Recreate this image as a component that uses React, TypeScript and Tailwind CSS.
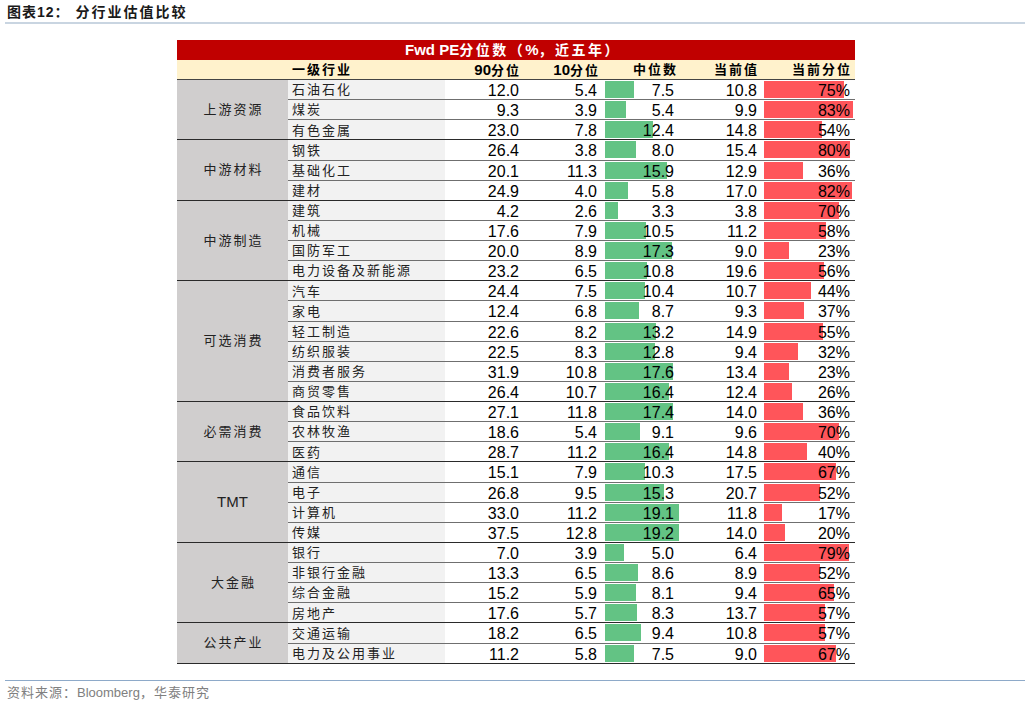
import React from 'react'

type Row = [string, number, number, number, number, number]

const groups: { label: string; rows: Row[] }[] = [
  {
    label: '上游资源',
    rows: [
      ['石油石化', 12.0, 5.4, 7.5, 10.8, 75],
      ['煤炭', 9.3, 3.9, 5.4, 9.9, 83],
      ['有色金属', 23.0, 7.8, 12.4, 14.8, 54],
    ],
  },
  {
    label: '中游材料',
    rows: [
      ['钢铁', 26.4, 3.8, 8.0, 15.4, 80],
      ['基础化工', 20.1, 11.3, 15.9, 12.9, 36],
      ['建材', 24.9, 4.0, 5.8, 17.0, 82],
    ],
  },
  {
    label: '中游制造',
    rows: [
      ['建筑', 4.2, 2.6, 3.3, 3.8, 70],
      ['机械', 17.6, 7.9, 10.5, 11.2, 58],
      ['国防军工', 20.0, 8.9, 17.3, 9.0, 23],
      ['电力设备及新能源', 23.2, 6.5, 10.8, 19.6, 56],
    ],
  },
  {
    label: '可选消费',
    rows: [
      ['汽车', 24.4, 7.5, 10.4, 10.7, 44],
      ['家电', 12.4, 6.8, 8.7, 9.3, 37],
      ['轻工制造', 22.6, 8.2, 13.2, 14.9, 55],
      ['纺织服装', 22.5, 8.3, 12.8, 9.4, 32],
      ['消费者服务', 31.9, 10.8, 17.6, 13.4, 23],
      ['商贸零售', 26.4, 10.7, 16.4, 12.4, 26],
    ],
  },
  {
    label: '必需消费',
    rows: [
      ['食品饮料', 27.1, 11.8, 17.4, 14.0, 36],
      ['农林牧渔', 18.6, 5.4, 9.1, 9.6, 70],
      ['医药', 28.7, 11.2, 16.4, 14.8, 40],
    ],
  },
  {
    label: 'TMT',
    rows: [
      ['通信', 15.1, 7.9, 10.3, 17.5, 67],
      ['电子', 26.8, 9.5, 15.3, 20.7, 52],
      ['计算机', 33.0, 11.2, 19.1, 11.8, 17],
      ['传媒', 37.5, 12.8, 19.2, 14.0, 20],
    ],
  },
  {
    label: '大金融',
    rows: [
      ['银行', 7.0, 3.9, 5.0, 6.4, 79],
      ['非银行金融', 13.3, 6.5, 8.6, 8.9, 52],
      ['综合金融', 15.2, 5.9, 8.1, 9.4, 65],
      ['房地产', 17.6, 5.7, 8.3, 13.7, 57],
    ],
  },
  {
    label: '公共产业',
    rows: [
      ['交通运输', 18.2, 6.5, 9.4, 10.8, 57],
      ['电力及公用事业', 11.2, 5.8, 7.5, 9.0, 67],
    ],
  },
]

const font = "font-['Liberation_Sans','Noto_Sans_CJK_SC',sans-serif]"

function DataRow({ row }: { row: Row }) {
  const [name, p90, p10, med, cur, pct] = row
  return (
    <div className="flex h-[20.14px] last:h-[19.14px] border-b border-[#6f6f6f] last:border-b-0">
      <div className="w-[157px] bg-[#f2f2f2] pl-[4px] pt-[1px] text-[13px] tracking-[2px] text-[#222] flex items-center">
        {name}
      </div>
      <div className="w-[80px] pr-[6px] text-right text-[16px] leading-[21px]">{p90.toFixed(1)}</div>
      <div className="w-[78px] pr-[6px] text-right text-[16px] leading-[21px]">{p10.toFixed(1)}</div>
      <div className="w-[78px] relative">
        <div
          className="absolute left-[2px] top-[1px] h-[17px] bg-[#63c384]"
          style={{ width: med * 3.88 }}
        />
        <div className="relative pr-[7px] text-right text-[16px] leading-[21px]">{med.toFixed(1)}</div>
      </div>
      <div className="w-[81px] pr-[5px] text-right text-[16px] leading-[21px]">{cur.toFixed(1)}</div>
      <div className="w-[93px] relative">
        <div
          className="absolute left-[2px] top-[1px] h-[17px] bg-[#ff555a]"
          style={{ width: pct * 1.07 }}
        />
        <div className="relative pr-[5px] text-right text-[16px] leading-[21px]">{pct}%</div>
      </div>
    </div>
  )
}

export default function App() {
  return (
    <div className={`w-[1030px] h-[705px] bg-white text-black ${font}`}>
      {/* Title */}
      <div className="pl-[7px] pt-[2px] h-[22px] leading-[20px] text-[14px] font-bold text-[#1a1a1a] flex">
        <span className="tracking-[1px]">图表12：</span>
        <span className="ml-[6px] tracking-[2px]">分行业估值比较</span>
      </div>
      <div className="mx-[5px] h-[2px] bg-[#c9d5e1]" />

      {/* Table */}
      <div className="ml-[177px] mt-[16px] w-[678px]">
        <div className="h-[20px] bg-[#c00000] text-white font-bold text-[14px] flex items-center justify-center pl-[4px] pr-[10px]">
          <span className="text-[15px]">Fwd PE</span>
          <span className="tracking-[2.5px]">分位数（</span>
          <span className="text-[15px]">%</span>
          <span className="tracking-[2.5px]">，近五年）</span>
        </div>
        <div className="h-[20px] bg-[#fff2cc] border-b border-[#444] flex font-bold text-[13px] leading-[19px]">
          <div className="w-[111px]" />
          <div className="w-[157px] pl-[4px] tracking-[2px]">一级行业</div>
          <div className="w-[80px] pr-[4px] text-right tracking-[2px]"><span className="text-[15px] tracking-normal">90</span>分位</div>
          <div className="w-[78px] pr-[3px] text-right tracking-[2px]"><span className="text-[15px] tracking-normal">10</span>分位</div>
          <div className="w-[78px] pr-[3px] text-right tracking-[2px]">中位数</div>
          <div className="w-[81px] pr-[3px] text-right tracking-[2px]">当前值</div>
          <div className="w-[93px] pr-[3px] text-right tracking-[2px]">当前分位</div>
        </div>
        {groups.map((g) => (
          <div key={g.label} className="flex border-b border-[#2a2a2a]">
            <div className="w-[111px] bg-[#d0cece] flex items-center justify-center text-[#222]">
              {g.label === 'TMT' ? (
                <span className="text-[15px]">TMT</span>
              ) : (
                <span className="text-[13px] tracking-[2px] pl-[2px]">{g.label}</span>
              )}
            </div>
            <div className="flex flex-col">
              {g.rows.map((r) => (
                <DataRow key={r[0]} row={r} />
              ))}
            </div>
          </div>
        ))}
      </div>

      {/* Footer */}
      <div className="mx-[5px] mt-[16px] h-px bg-[#8eaac9]" />
      <div className="pl-[7px] pt-[3px] text-[13px] leading-[18px] text-[#808080] tracking-[1px]">
        资料来源：<span className="tracking-normal">Bloomberg</span>，华泰研究
      </div>
    </div>
  )
}
